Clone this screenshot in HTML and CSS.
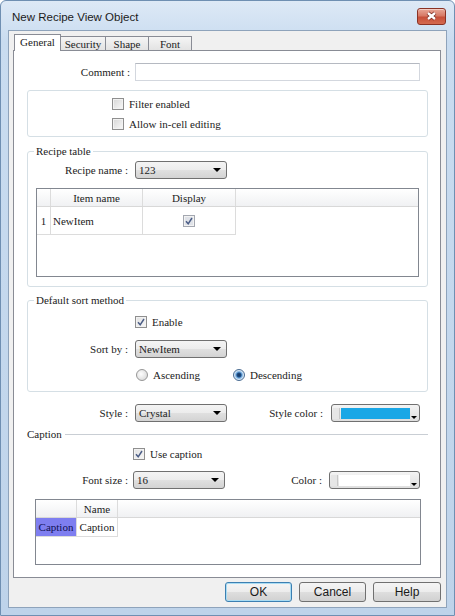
FILE: index.html
```html
<!DOCTYPE html>
<html lang="en">
<head>
    <meta charset="UTF-8">
    <title>New Recipe View Object</title>
    <link rel="stylesheet" href="styles.css">
</head>
<body>
<div class="window">
    <div class="titlebar">
        <span class="title">New Recipe View Object</span>
        <div class="close">
            <svg width="27" height="15" viewBox="0 0 27 15">
                <path d="M10 4 L17 10 M17 4 L10 10" stroke="#7a2a20" stroke-width="4" fill="none"/>
                <path d="M10 4 L17 10 M17 4 L10 10" stroke="#fff" stroke-width="2.4" fill="none"/>
            </svg>
        </div>
    </div>

    <div class="client">
        <div class="tabs">
            <div class="tab active">General</div>
            <div class="tab">Security</div>
            <div class="tab">Shape</div>
            <div class="tab">Font</div>
        </div>

        <div class="panel">
            <div class="row row_comment">
                <span class="lbl">Comment :</span>
                <div class="textbox"></div>
            </div>

            <div class="group">
                <div class="check_row"><span class="check"></span>Filter enabled</div>
                <div class="check_row"><span class="check"></span>Allow in-cell editing</div>
            </div>

            <!-- recipe table -->
            <fieldset class="fs fs_recipe">
                <legend>Recipe table</legend>
                <div class="row">
                    <span class="lbl">Recipe name :</span>
                    <div class="combo">123<span class="combo_arrow"></span></div>
                </div>
                <div class="grid grid_recipe">
                    <div class="grid_head">
                        <div class="gcell c_num"></div>
                        <div class="gcell c_item">Item name</div>
                        <div class="gcell c_disp">Display</div>
                        <div class="gcell c_fill"></div>
                    </div>
                    <div class="grid_row">
                        <div class="gcell c_num">1</div>
                        <div class="gcell c_item left">NewItem</div>
                        <div class="gcell c_disp">
                            <span class="check on dim">
                                <svg width="10" height="10" viewBox="0 0 10 10"><path d="M2 5.2 L4.2 7.8 L8 2" stroke="#4b5d86" stroke-width="1.5" fill="none"/></svg>
                            </span>
                        </div>
                    </div>
                </div>
            </fieldset>

            <!-- sort -->
            <fieldset class="fs fs_sort">
                <legend>Default sort method</legend>
                <div class="check_row enable_row">
                    <span class="check on">
                        <svg width="10" height="10" viewBox="0 0 10 10"><path d="M2 5.2 L4.2 7.8 L8 2" stroke="#4b5d86" stroke-width="1.5" fill="none"/></svg>
                    </span>Enable
                </div>
                <div class="row sort_row">
                    <span class="lbl">Sort by :</span>
                    <div class="combo">NewItem<span class="combo_arrow"></span></div>
                </div>
                <div class="radio_row">
                    <div class="radio_item first"><span class="radio"></span>Ascending</div>
                    <div class="radio_item"><span class="radio on"></span>Descending</div>
                </div>
            </fieldset>

            <div class="row style_row">
                <span class="lbl">Style :</span>
                <div class="combo">Crystal<span class="combo_arrow"></span></div>
                <span class="lbl2">Style color :</span>
                <div class="colorbox">
                    <span class="cb_strip"></span>
                    <span class="cb_fill blue"></span>
                    <span class="cb_arrow"><span class="tri"></span></span>
                </div>
            </div>

            <div class="caption_sep">
                <span>Caption</span>
                <div class="sep_line"></div>
            </div>

            <div class="check_row use_caption">
                <span class="check on">
                    <svg width="10" height="10" viewBox="0 0 10 10"><path d="M2 5.2 L4.2 7.8 L8 2" stroke="#4b5d86" stroke-width="1.5" fill="none"/></svg>
                </span>Use caption
            </div>

            <div class="row font_row">
                <span class="lbl">Font size :</span>
                <div class="combo">16<span class="combo_arrow"></span></div>
                <span class="lbl2">Color :</span>
                <div class="colorbox">
                    <span class="cb_strip"></span>
                    <span class="cb_fill"></span>
                    <span class="cb_arrow"><span class="tri"></span></span>
                </div>
            </div>

            <div class="grid grid_caption">
                <div class="grid_head">
                    <div class="gcell c_rh"></div>
                    <div class="gcell c_name">Name</div>
                    <div class="gcell c_fill"></div>
                </div>
                <div class="grid_row row_small">
                    <div class="gcell c_rh selected">Caption</div>
                    <div class="gcell c_name">Caption</div>
                </div>
            </div>
        </div>

        <div class="buttons">
            <div class="btn default">OK</div>
            <div class="btn">Cancel</div>
            <div class="btn help">Help</div>
        </div>
    </div>
</div>
</body>
</html>
```

FILE: styles.css
```css
body{
    margin:0;
    background:#fff;
}
.window{
    width:455px;
    height:616px;
    box-sizing:border-box;
    border:1px solid #6f8fb2;
    border-radius:6px 6px 0 0;
    background:linear-gradient(to bottom, #dde9f6 0, #c9dcf0 40px, #bed3ea 100%);
    padding:0 7px 7px 7px;
    display:flex;
    flex-direction:column;
}
.titlebar{
    height:29px;
    display:flex;
    align-items:flex-start;
    flex:none;
}
.title{
    font:11.5px "Liberation Sans", Arial, sans-serif;
    line-height:15px;
    color:#1b1b1b;
    padding:9px 0 0 4px;
}
.close{
    margin:7px 1px 0 auto;
    width:29px;
    height:17px;
    box-sizing:border-box;
    border:1px solid #8a3225;
    border-radius:3px;
    background:linear-gradient(to bottom, #e9a898 0%, #d77a66 45%, #c7503a 55%, #d46a50 100%);
    box-shadow:inset 0 1px 0 rgba(255,255,255,.45);
}
.close svg{
    display:block;
}

.client{
    flex:1;
    border:1px solid #8ea3bb;
    background:#f0f0f0;
    padding:3px 5px 5px 4px;
    display:flex;
    flex-direction:column;
    font:11px "Liberation Serif", "Times New Roman", serif;
    color:#222;
}

/* tabs */
.tabs{
    display:flex;
    align-items:flex-start;
    height:17px;
    margin-bottom:-1px;
    padding-left:1px;
    flex:none;
}
.tab{
    box-sizing:border-box;
    border:1px solid #898c95;
    display:flex;
    align-items:center;
    justify-content:center;
}
.tab.active{
    position:relative;
    z-index:1;
    width:47px;
    height:17px;
    border-bottom:none;
    background:#fff;
    padding-bottom:2px;
}
.tab:not(.active){
    margin-top:2px;
    margin-left:-1px;
    height:15px;
    background:linear-gradient(to bottom, #f5f5f5, #e3e3e3);
}
.tab:nth-child(2){ width:46px; }
.tab:nth-child(3){ width:44px; }
.tab:nth-child(4){ width:44px; }

.panel{
    flex:1;
    border:1px solid #898c95;
    background:#fff;
    display:flex;
    flex-direction:column;
}

/* rows */
.row{
    display:flex;
    align-items:center;
    height:18px;
    flex:none;
}
.lbl{
    text-align:right;
    flex:none;
    white-space:nowrap;
}
.lbl2{
    text-align:right;
    flex:none;
    white-space:nowrap;
}
.row_comment{
    margin-top:12px;
}
.row_comment .lbl{
    width:116px;
    margin-right:5px;
}
.textbox{
    width:285px;
    height:18px;
    box-sizing:border-box;
    border:1px solid #d3d7de;
    border-top-color:#b5b9c1;
    background:#fff;
}

.group{
    margin:9px 12px 0 13px;
    border:1px solid #d5dfe5;
    border-radius:3px;
    padding:3px 0 2px 84px;
}
.check_row{
    display:flex;
    align-items:center;
    height:20px;
    white-space:nowrap;
}
.check{
    width:12px;
    height:12px;
    box-sizing:border-box;
    border:1px solid #8f8f8f;
    background:linear-gradient(135deg, #d6d6d6, #f9f9f9);
    box-shadow:inset 0 0 0 1px #f2f2f2;
    display:inline-flex;
    align-items:center;
    justify-content:center;
    flex:none;
    margin-right:5px;
}
.check.on{
    background:linear-gradient(135deg, #e1e1e1, #f7f7f7);
}
.check.dim{
    margin-right:0;
    background:#dfe2e8;
    border-color:#a3a7b0;
}
.check svg{
    display:block;
}

.fs{
    margin:7px 12px 0 13px;
    padding:0 0 9px 0;
    border:1px solid #d5dfe5;
    border-radius:3px;
    min-width:0;
}
.fs legend{
    padding:0 2px;
    margin-left:6px;
    line-height:14px;
}
.fs .row{
    margin-top:3px;
}
.fs .lbl{
    width:100px;
    margin-right:7px;
}

.combo{
    width:92px;
    height:18px;
    box-sizing:border-box;
    display:flex;
    align-items:center;
    border:1px solid #707070;
    border-radius:3px;
    background:linear-gradient(to bottom, #f4f4f4 0%, #ececec 50%, #e0e0e0 50%, #d3d3d3 100%);
    padding:0 5px 0 3px;
    flex:none;
}
.combo_arrow{
    margin-left:auto;
    width:0;
    height:0;
    border-left:4px solid transparent;
    border-right:4px solid transparent;
    border-top:4px solid #000;
}

/* grids */
.grid{
    box-sizing:border-box;
    border:1px solid #828790;
    background:#fff;
    flex:none;
}
.grid_recipe{
    margin:9px 8px 0 8px;
    height:89px;
}
.grid_head{
    display:flex;
    height:18px;
    box-sizing:border-box;
    border-bottom:1px solid #d8d8d8;
    background:linear-gradient(to bottom, #ffffff, #f0f1f3);
}
.grid_row{
    display:flex;
    height:28px;
}
.grid_row .gcell{
    border-bottom:1px solid #dcdcdc;
}
.gcell{
    box-sizing:border-box;
    border-right:1px solid #dcdcdc;
    display:flex;
    align-items:center;
    justify-content:center;
    white-space:nowrap;
}
.gcell.left{
    justify-content:flex-start;
    padding-left:2px;
}
.c_num{ width:14px; }
.c_item{ width:92px; }
.c_disp{ width:93px; }
.c_fill{
    flex:1;
    border-right:none;
}
.c_rh{ width:41px; }
.c_name{ width:41px; }
.row_small{
    height:19px;
}
.gcell.selected{
    background:#7e7ef0;
    color:#101050;
}

.fs_sort{
    margin-top:6px;
    padding-bottom:6px;
}
.enable_row{
    margin-top:5px;
    padding-left:107px;
}
.fs .sort_row{
    margin-top:8px;
}
.radio_row{
    display:flex;
    align-items:center;
    height:20px;
    margin-top:7px;
    padding-left:108px;
}
.radio_item{
    display:flex;
    align-items:center;
}
.radio_item.first{
    width:97px;
}
.radio{
    width:12px;
    height:12px;
    box-sizing:border-box;
    border-radius:50%;
    border:1px solid #969696;
    background:radial-gradient(circle at 40% 40%, #fdfdfd, #d2d2d2);
    margin-right:5px;
    flex:none;
}
.radio.on{
    border-color:#4a6c92;
    background:radial-gradient(circle, #12335f 0, #1f4f86 2px, #6aa5dc 3px, #d7e8f7 4.5px);
}

.style_row{
    margin-top:12px;
}
.style_row .lbl{
    width:114px;
    margin-right:7px;
}
.style_row .lbl2{
    width:96px;
    margin-right:8px;
}
.colorbox{
    width:89px;
    height:18px;
    box-sizing:border-box;
    display:flex;
    border:1px solid #707070;
    border-radius:3px;
    background:linear-gradient(to bottom, #f4f4f4, #dedede);
    padding:3px 1px 2px 1px;
    flex:none;
}
.cb_strip{
    width:6px;
    margin-right:1px;
    background:#e6e6e6;
    border-right:1px solid #c8c8c8;
}
.cb_fill{
    flex:1;
    background:#fff;
}
.cb_fill.blue{
    background:#1aa7e6;
}
.cb_arrow{
    width:8px;
    display:flex;
    align-items:flex-end;
    justify-content:center;
}
.tri{
    width:0;
    height:0;
    border-left:3px solid transparent;
    border-right:3px solid transparent;
    border-top:3px solid #000;
}

.caption_sep{
    display:flex;
    align-items:center;
    height:14px;
    margin:5px 12px 0 13px;
    flex:none;
}
.sep_line{
    flex:1;
    margin-left:3px;
    border-top:1px solid #c9ced4;
}
.use_caption{
    margin-top:3px;
    padding-left:119px;
    flex:none;
}
.font_row{
    margin-top:7px;
}
.font_row .lbl{
    width:114px;
    margin-right:5px;
}
.font_row .lbl2{
    width:97px;
    margin-right:7px;
}
.font_row .colorbox{
    width:91px;
}
.grid_caption{
    margin:10px 0 0 21px;
    width:386px;
    height:66px;
}

/* buttons */
.buttons{
    display:flex;
    justify-content:flex-end;
    gap:7px;
    margin-top:4px;
    flex:none;
}
.btn{
    width:67px;
    height:20px;
    box-sizing:border-box;
    border:1px solid #707070;
    border-radius:3px;
    background:linear-gradient(to bottom, #f4f4f4 0%, #ececec 50%, #dedede 50%, #d1d1d1 100%);
    display:flex;
    align-items:center;
    justify-content:center;
    font:12px "Liberation Sans", Arial, sans-serif;
    color:#1a1a1a;
}
.btn.help{
    width:68px;
}
.btn.default{
    border-color:#3c7fb1;
    box-shadow:inset 0 0 0 1px #a9dcf3;
}
```
